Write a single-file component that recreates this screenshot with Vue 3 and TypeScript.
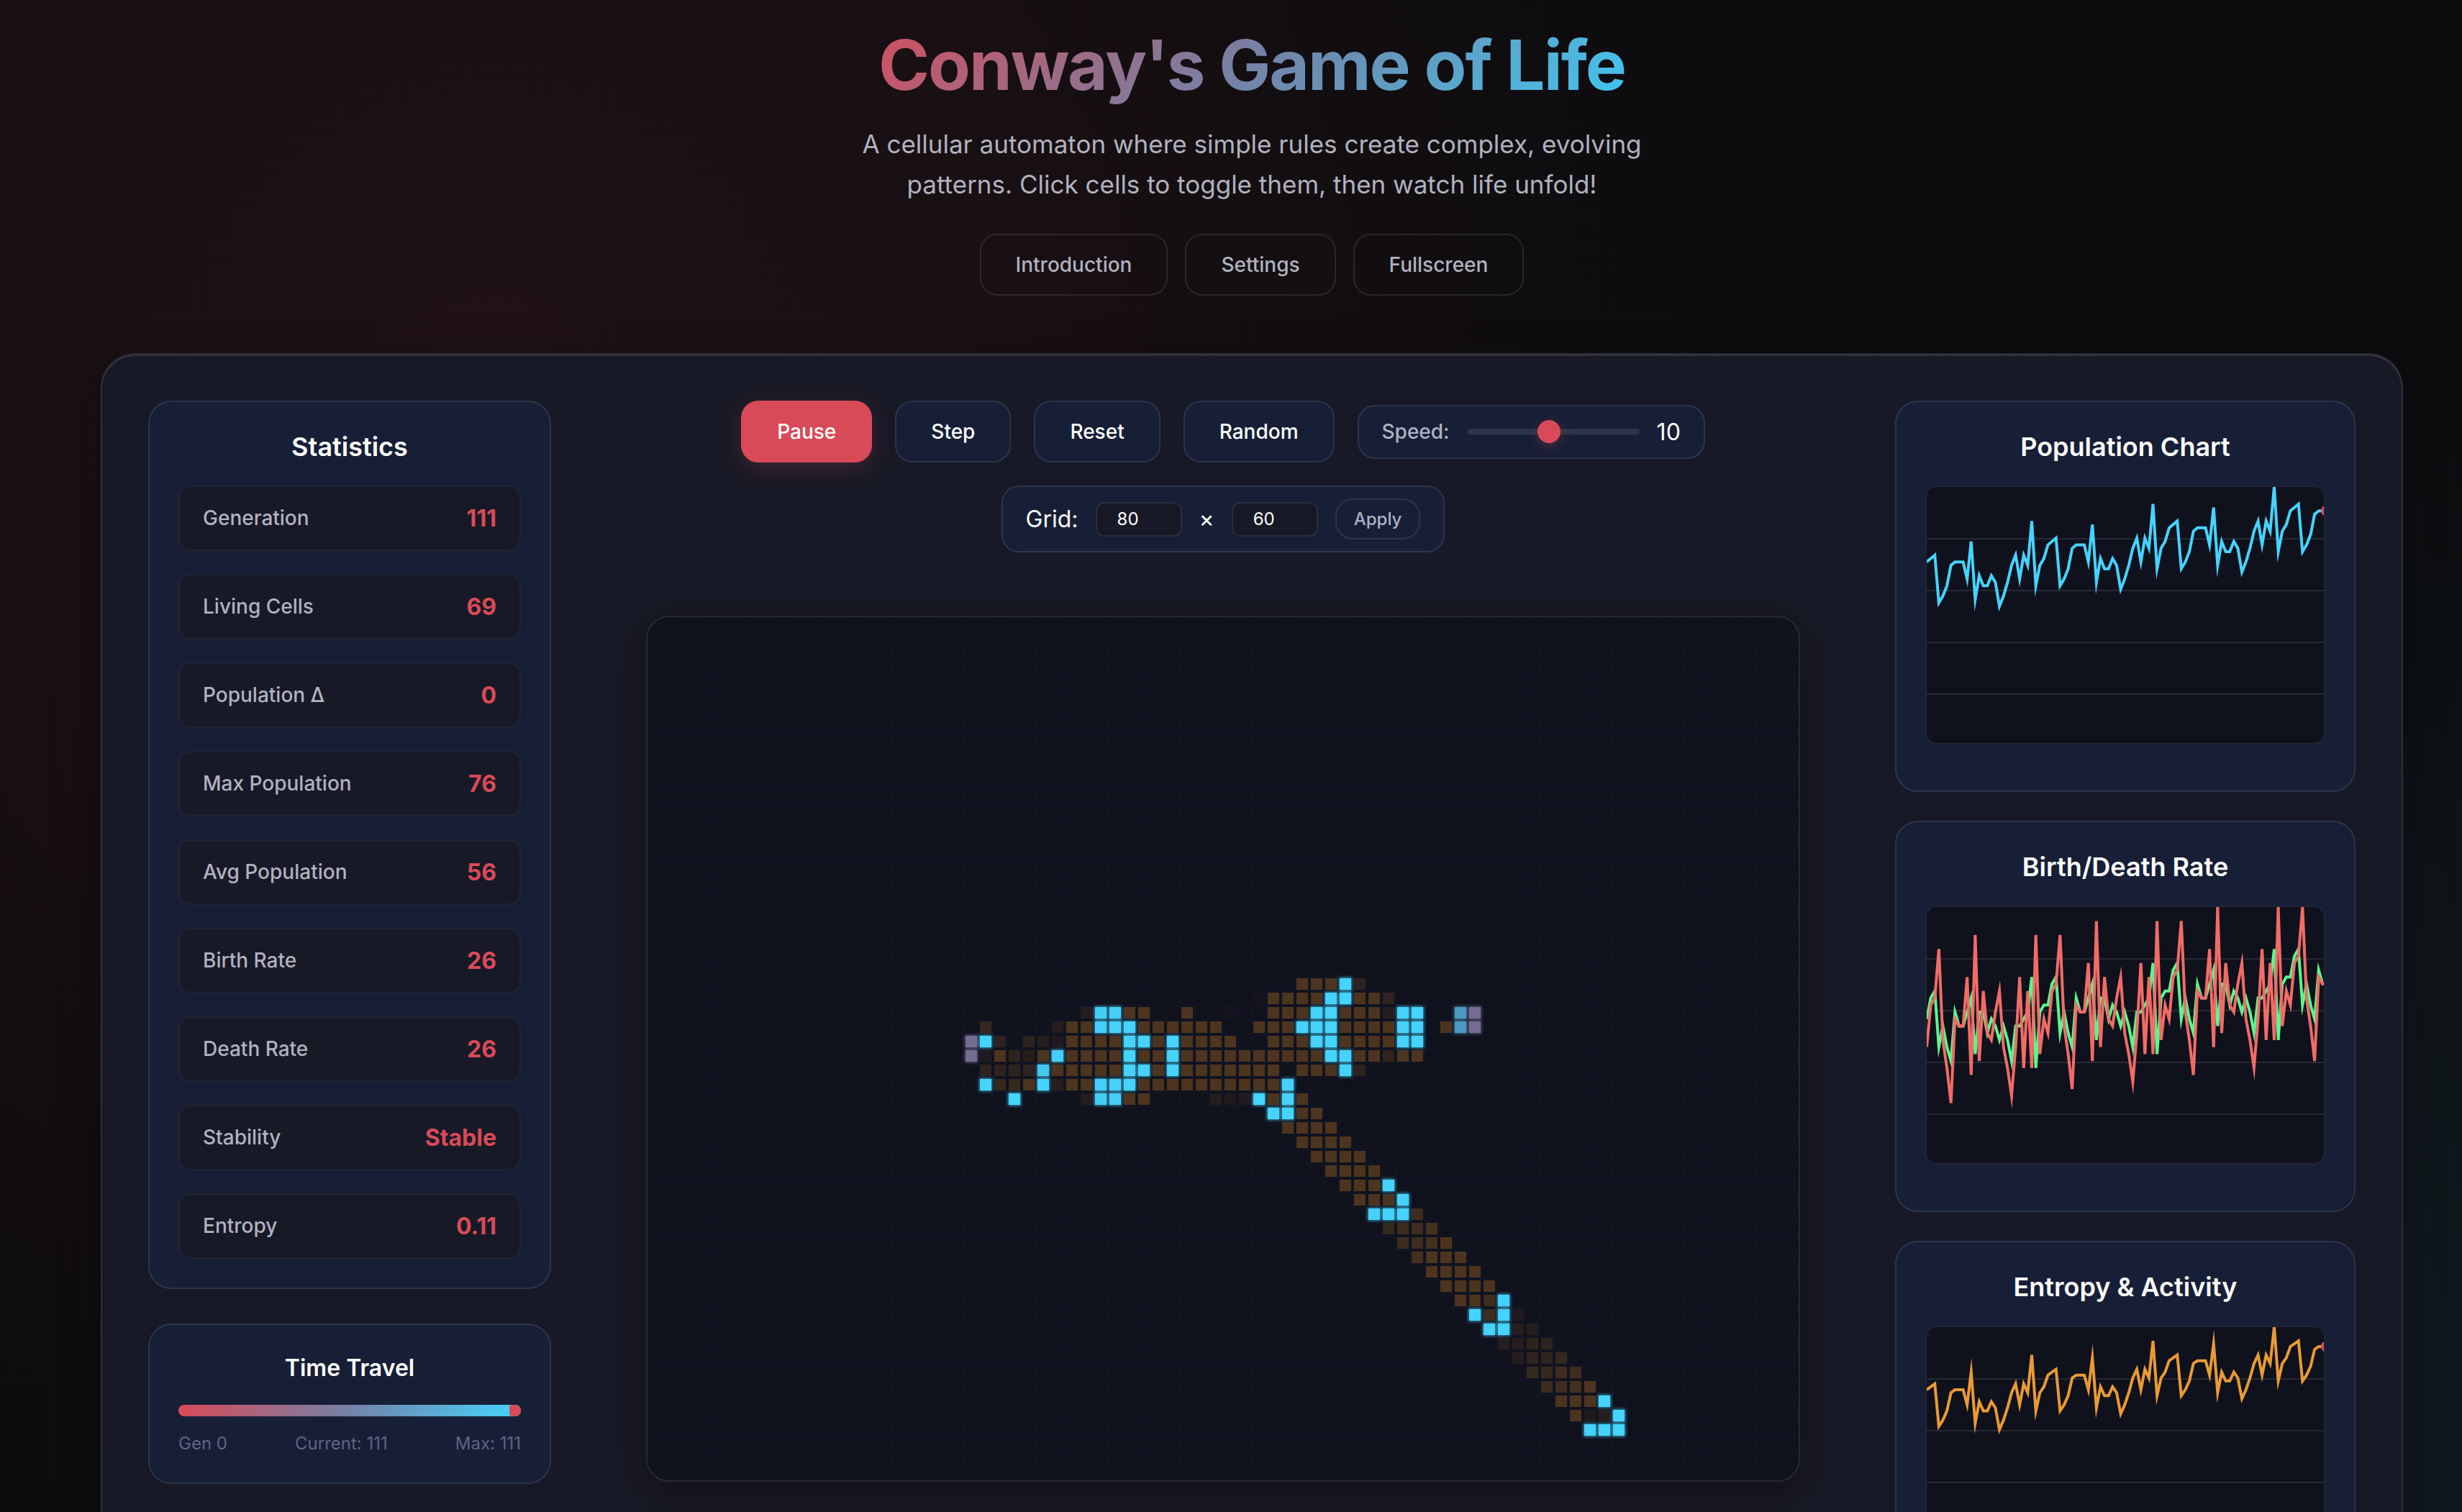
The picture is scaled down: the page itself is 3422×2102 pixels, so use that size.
<script setup lang="ts">
import { ref } from 'vue'

interface Snapshot {
  population: number
  births: number
  deaths: number
  entropy: number
}

interface Tile {
  key: string
  x: number
  y: number
  fill: string
}

const COLS = 80
const ROWS = 60
const CELL = 20
const GENERATIONS = 111
const HISTORY = 100

/* Gosper glider gun, column lists by row */
const GUN: number[][] = [
  [24],
  [22, 24],
  [12, 13, 20, 21, 34, 35],
  [11, 15, 20, 21, 34, 35],
  [0, 1, 10, 16, 20, 21],
  [0, 1, 10, 14, 16, 17, 22, 24],
  [10, 16, 24],
  [11, 15],
  [12, 13],
]
const ORIGIN = { x: 22, y: 25 }

/* Fading trails: [row, first column, one level per cell] */
const TRAILS: [number, number, string][] = [
  [25, 45, '777.3'],
  [26, 42, '07777..773'],
  [27, 30, '2..77..7..0..777..7772'],
  [28, 23, '4....277...777777..777...7777...7'],
  [29, 24, '3.3217777..7.7777..777..7777'],
  [30, 23, '17327.7777.77.7777777777..77377'],
  [31, 23, '3333.77777..7.7777777.777.3'],
  [32, 24, '447.277...7777777777'],
  [33, 30, '2..77....211.7.7'],
  [34, 45, '77'],
  [35, 44, '7777'],
  [36, 45, '7777'],
  [37, 46, '7777'],
  [38, 47, '7777'],
  [39, 48, '777'],
  [40, 49, '777'],
  [41, 53, '5'],
  [42, 51, '4556'],
  [43, 52, '5567'],
  [44, 53, '6777'],
  [45, 54, '7777'],
  [46, 55, '7777'],
  [47, 56, '775'],
  [48, 58, '5.1'],
  [49, 60, '22'],
  [50, 59, '2233'],
  [51, 60, '2334'],
  [52, 61, '4455'],
  [53, 62, '5567'],
  [54, 63, '777'],
  [55, 64, '712'],
]
const TRAIL_COLORS = ['#16131c', '#201a1e', '#261d1e', '#2e231e', '#35281e', '#3e2c1e', '#45301d', '#4c341e']

const AGE_STOPS: [number, number[]][] = [
  [0, [69, 212, 253]],
  [6, [69, 205, 246]],
  [22, [74, 155, 195]],
  [100, [118, 108, 145]],
]

function ageColor(age: number): string {
  for (let i = 1; i < AGE_STOPS.length; i++) {
    const [to, b] = AGE_STOPS[i]
    const [from, a] = AGE_STOPS[i - 1]
    if (age <= to) {
      const t = (age - from) / (to - from)
      return `rgb(${a.map((v, k) => Math.round(v + (b[k] - v) * t)).join(',')})`
    }
  }
  return `rgb(${AGE_STOPS[AGE_STOPS.length - 1][1].join(',')})`
}

function entropyOf(population: number): number {
  const p = population / (COLS * ROWS)
  if (p <= 0 || p >= 1) return 0
  return -(p * Math.log2(p) + (1 - p) * Math.log2(1 - p))
}

/* age per cell, -1 for a dead one */
let ages: number[] = new Array(COLS * ROWS).fill(-1)
GUN.forEach((row, y) => row.forEach((x) => (ages[(y + ORIGIN.y) * COLS + x + ORIGIN.x] = 0)))

const history: Snapshot[] = []

function advance(): void {
  const next: number[] = new Array(COLS * ROWS).fill(-1)
  let population = 0
  let births = 0
  let deaths = 0
  for (let y = 0; y < ROWS; y++) {
    for (let x = 0; x < COLS; x++) {
      let n = 0
      for (let dy = -1; dy <= 1; dy++) {
        for (let dx = -1; dx <= 1; dx++) {
          if (!dx && !dy) continue
          const yy = (y + dy + ROWS) % ROWS
          const xx = (x + dx + COLS) % COLS
          if (ages[yy * COLS + xx] >= 0) n++
        }
      }
      const i = y * COLS + x
      const alive = ages[i] >= 0
      if (alive && (n === 2 || n === 3)) next[i] = ages[i] + 1
      else if (!alive && n === 3) {
        next[i] = 0
        births++
      } else if (alive) deaths++
      if (next[i] >= 0) population++
    }
  }
  ages = next
  history.push({ population, births, deaths, entropy: entropyOf(population) })
}

for (let g = 0; g < GENERATIONS; g++) advance()

const recent = history.slice(-HISTORY)
const last = recent[recent.length - 1]
const before = recent[recent.length - 2]
const populations = history.map((s) => s.population)

const liveTiles: Tile[] = []
ages.forEach((age, i) => {
  if (age < 0) return
  const x = i % COLS
  const y = Math.floor(i / COLS)
  liveTiles.push({ key: `${x}-${y}`, x: x * CELL + 2, y: y * CELL + 2, fill: ageColor(age) })
})

const trailTiles: Tile[] = []
for (const [row, start, levels] of TRAILS) {
  ;[...levels].forEach((level, k) => {
    const col = start + k
    if (level === '.' || ages[row * COLS + col] >= 0) return
    trailTiles.push({ key: `${col}-${row}`, x: col * CELL + 2, y: row * CELL + 2, fill: TRAIL_COLORS[Number(level)] })
  })
}

const stats = [
  { label: 'Generation', value: String(GENERATIONS) },
  { label: 'Living Cells', value: String(last.population) },
  { label: 'Population Δ', value: String(last.population - before.population) },
  { label: 'Max Population', value: String(Math.max(...populations)) },
  { label: 'Avg Population', value: String(Math.round(populations.reduce((a, b) => a + b, 0) / populations.length)) },
  { label: 'Birth Rate', value: String(last.births) },
  { label: 'Death Rate', value: String(last.deaths) },
  { label: 'Stability', value: 'Stable' },
  { label: 'Entropy', value: last.entropy.toFixed(2) },
]

const CHART_W = 556
const CHART_H = 360

function line(values: number[], max: number): string {
  return values
    .map((v, i) => `${((i / (HISTORY - 1)) * CHART_W).toFixed(2)},${((1 - v / max) * CHART_H).toFixed(2)}`)
    .join(' ')
}

const entropies = recent.map((s) => s.entropy)
const rateMax = Math.max(...recent.map((s) => Math.max(s.births, s.deaths)))
const maxPopulation = Math.max(...recent.map((s) => s.population))
const maxEntropy = Math.max(...entropies)

const charts = [
  {
    title: 'Population Chart',
    lines: [{ color: '#45d4ff', points: line(recent.map((s) => s.population), maxPopulation) }],
    dotY: (1 - last.population / maxPopulation) * CHART_H,
  },
  {
    title: 'Birth/Death Rate',
    lines: [
      { color: '#5af78e', points: line(recent.map((s) => s.births), rateMax) },
      { color: '#f26b66', points: line(recent.map((s) => s.deaths), rateMax) },
    ],
    dotY: null,
  },
  {
    title: 'Entropy & Activity',
    lines: [{ color: '#ea9a34', points: line(entropies, maxEntropy) }],
    dotY: (1 - last.entropy / maxEntropy) * CHART_H,
  },
]

const speed = ref(10)
const gridWidth = ref('80')
const gridHeight = ref('60')
const position = ref(GENERATIONS)
</script>

<template>
  <div class="page">
    <header class="hero">
      <h1>Conway's Game of Life</h1>
      <p>
        A cellular automaton where simple rules create complex, evolving patterns. Click cells to toggle them, then
        watch life unfold!
      </p>
      <nav class="hero-actions">
        <button type="button" class="ghost">Introduction</button>
        <button type="button" class="ghost">Settings</button>
        <button type="button" class="ghost">Fullscreen</button>
      </nav>
    </header>

    <main class="shell">
      <aside class="side">
        <section class="panel">
          <h2>Statistics</h2>
          <dl class="stats">
            <div v-for="s in stats" :key="s.label" class="stat">
              <dt>{{ s.label }}</dt>
              <dd>{{ s.value }}</dd>
            </div>
          </dl>
        </section>
        <section class="panel travel">
          <h3>Time Travel</h3>
          <input v-model="position" type="range" class="timeline" min="0" :max="GENERATIONS" aria-label="Generation" />
          <div class="marks">
            <span>Gen 0</span>
            <span>Current: {{ position }}</span>
            <span>Max: {{ GENERATIONS }}</span>
          </div>
        </section>
      </aside>

      <section class="stage">
        <div class="controls">
          <button type="button" class="btn primary">Pause</button>
          <button type="button" class="btn">Step</button>
          <button type="button" class="btn">Reset</button>
          <button type="button" class="btn">Random</button>
          <div class="box speed">
            <label for="speed">Speed:</label>
            <input id="speed" v-model="speed" type="range" min="1" max="20" />
            <output for="speed">{{ speed }}</output>
          </div>
          <div class="box size">
            <label for="grid-width">Grid:</label>
            <input id="grid-width" v-model="gridWidth" type="text" inputmode="numeric" />
            <span>×</span>
            <input v-model="gridHeight" type="text" inputmode="numeric" aria-label="Grid height" />
            <button type="button" class="apply">Apply</button>
          </div>
        </div>

        <div class="board">
          <svg viewBox="0 0 1600 1200" role="img" aria-label="Cell grid">
            <defs>
              <pattern id="mesh" width="20" height="20" patternUnits="userSpaceOnUse">
                <path d="M0 0H20M0 20H20M0 0V20M20 0V20" stroke="#6a7aa8" stroke-opacity="0.016" stroke-width="4" />
              </pattern>
              <filter id="glow" x="-5%" y="-5%" width="110%" height="110%">
                <feGaussianBlur stdDeviation="2" />
              </filter>
            </defs>
            <rect width="1600" height="1200" fill="url(#mesh)" />
            <rect v-for="t in trailTiles" :key="t.key" :x="t.x" :y="t.y" width="16" height="16" :fill="t.fill" />
            <g filter="url(#glow)" opacity="0.7">
              <rect v-for="t in liveTiles" :key="t.key" :x="t.x - 1" :y="t.y - 1" width="18" height="18" :fill="t.fill" />
            </g>
            <rect v-for="t in liveTiles" :key="t.key" :x="t.x" :y="t.y" width="16" height="16" :fill="t.fill" />
          </svg>
        </div>
      </section>

      <aside class="side charts">
        <section v-for="c in charts" :key="c.title" class="panel">
          <h2>{{ c.title }}</h2>
          <div class="chart">
            <svg :viewBox="`0 0 ${CHART_W} ${CHART_H}`" preserveAspectRatio="none" role="img" :aria-label="c.title">
              <path
                v-for="n in 4"
                :key="n"
                :d="`M0 ${n * 72}H${CHART_W}`"
                stroke="#ffffff"
                stroke-opacity="0.1"
                stroke-width="2"
              />
              <polyline
                v-for="l in c.lines"
                :key="l.color"
                :points="l.points"
                :stroke="l.color"
                fill="none"
                stroke-width="4"
                stroke-miterlimit="10"
              />
              <circle v-if="c.dotY !== null" :cx="CHART_W" :cy="c.dotY" r="8" fill="#d94a58" />
            </svg>
          </div>
        </section>
      </aside>
    </main>
  </div>
</template>

<style>
body {
  margin: 0;
  background: #0a0a0b;
}
</style>

<style scoped>
* {
  box-sizing: border-box;
}

.page {
  height: 100vh;
  overflow-y: auto;
  scrollbar-width: none;
  padding: 32px 82px 64px 140px;
  background:
    radial-gradient(circle at 20% 25%, rgba(217, 74, 88, 0.1) 0%, transparent 56%),
    radial-gradient(circle at 80% 100%, rgba(69, 212, 255, 0.1) 0%, transparent 50%),
    #0c0c0e;
  color: #fff;
  font-family: Inter, 'Liberation Sans', sans-serif;
  font-size: 32px;
  line-height: 51px;
}

button,
input {
  font-family: inherit;
  margin: 0;
}

h1,
h2,
h3,
p,
dl,
dd {
  margin: 0;
}

.hero {
  display: flex;
  flex-direction: column;
  align-items: center;
  text-align: center;
}

.hero h1 {
  font-size: 96px;
  line-height: 116px;
  font-weight: 700;
  letter-spacing: -2px;
  background: linear-gradient(135deg, #d0505f, #7482a6 50%, #42c6f0);
  -webkit-background-clip: text;
  background-clip: text;
  color: transparent;
}

.hero p {
  max-width: 1200px;
  margin-top: 24px;
  font-size: 35px;
  line-height: 56px;
  color: #b0b2c0;
}

.hero-actions {
  display: flex;
  gap: 24px;
  margin-top: 41px;
}

.ghost,
.btn {
  height: 86px;
  padding: 0 48px;
  border: 2px solid rgba(255, 255, 255, 0.1);
  border-radius: 24px;
  font-size: 28px;
  font-weight: 500;
}

.ghost {
  background: transparent;
  color: #b0b2c0;
}

.shell {
  max-width: 3200px;
  margin: 80px auto 0;
  padding: 64px;
  display: grid;
  grid-template-columns: 560px minmax(0, 1fr) 640px;
  align-items: start;
  gap: 64px;
  background: #181926;
  border: 2px solid rgba(255, 255, 255, 0.1);
  border-radius: 48px;
  box-shadow: 0 16px 64px rgba(0, 0, 0, 0.3), inset 0 2px 0 rgba(255, 255, 255, 0.1);
}

.side {
  display: flex;
  flex-direction: column;
  gap: 48px;
}

.side.charts {
  gap: 40px;
}

.panel {
  padding: 40px;
  background: #171f36;
  border: 2px solid #2b364a;
  border-radius: 32px;
}

.panel h2 {
  margin-bottom: 32px;
  font-size: 36px;
  line-height: 44px;
  font-weight: 600;
  text-align: center;
}

.stats {
  display: flex;
  flex-direction: column;
  gap: 32px;
}

.stat {
  display: flex;
  justify-content: space-between;
  align-items: center;
  height: 91px;
  padding: 0 32px;
  background: #181926;
  border: 2px solid #222432;
  border-radius: 16px;
}

.stat dt {
  font-size: 28px;
  font-weight: 500;
  color: #b0b2c0;
}

.stat dd {
  font-size: 32px;
  font-weight: 700;
  color: #d94a58;
}

.travel h3 {
  margin-bottom: 32px;
  font-size: 32px;
  line-height: 39px;
  font-weight: 600;
  text-align: center;
}

.timeline {
  display: block;
  width: 100%;
  height: 16px;
  appearance: none;
  border-radius: 8px;
  background: linear-gradient(90deg, #d94a58, #7482a6 50%, #45d4ff);
}

.timeline::-webkit-slider-thumb {
  appearance: none;
  width: 16px;
  height: 16px;
  border-radius: 4px 8px 8px 4px;
  background: #d94a58;
}

.marks {
  display: flex;
  justify-content: space-between;
  margin-top: 24px;
  font-size: 24px;
  line-height: 28px;
  color: #5f6484;
}

.stage {
  display: flex;
  flex-direction: column;
  align-items: center;
}

.controls {
  display: flex;
  flex-wrap: wrap;
  justify-content: center;
  align-items: center;
  gap: 32px;
  max-width: 1500px;
  margin-bottom: 88px;
}

.btn {
  background: #171f36;
  border-color: #2b364a;
  color: #fff;
}

.btn.primary {
  background: #d94a58;
  border-color: #d94a58;
  box-shadow: 0 8px 32px rgba(217, 74, 88, 0.2);
}

.box {
  display: flex;
  align-items: center;
  gap: 24px;
  padding: 0 32px;
  background: #171f36;
  border: 2px solid #2b364a;
  border-radius: 24px;
}

.speed {
  height: 75px;
}

.speed label {
  font-size: 28px;
  font-weight: 500;
  color: #b0b2c0;
}

.speed input {
  width: 240px;
  height: 8px;
  appearance: none;
  border-radius: 4px;
  background: #2b364a;
}

.speed input::-webkit-slider-thumb {
  appearance: none;
  width: 32px;
  height: 32px;
  border-radius: 50%;
  background: #d94a58;
  box-shadow: 0 4px 16px rgba(217, 74, 88, 0.3);
}

.size {
  height: 93px;
}

.size input {
  width: 120px;
  height: 48px;
  padding: 0 28px;
  border: 2px solid #2c2d3a;
  border-radius: 12px;
  background: #181926;
  color: #fff;
  font-size: 24px;
}

.apply {
  height: 57px;
  padding: 0 24px;
  border: 2px solid #2b364a;
  border-radius: 24px;
  background: transparent;
  color: #b0b2c0;
  font-size: 24px;
  font-weight: 500;
}

.board {
  width: 100%;
  max-width: 1604px;
  border: 2px solid #272935;
  border-radius: 32px;
  overflow: hidden;
  background: #0f111d;
  box-shadow: 0 16px 64px rgba(0, 0, 0, 0.3);
}

.board svg {
  display: block;
  width: 100%;
}

.chart {
  height: 360px;
  margin-bottom: 24px;
  border: 2px solid #222432;
  border-radius: 16px;
  overflow: hidden;
  background: #0f111d;
}

.chart svg {
  display: block;
  width: calc(100% + 4px);
  height: 360px;
}
</style>
